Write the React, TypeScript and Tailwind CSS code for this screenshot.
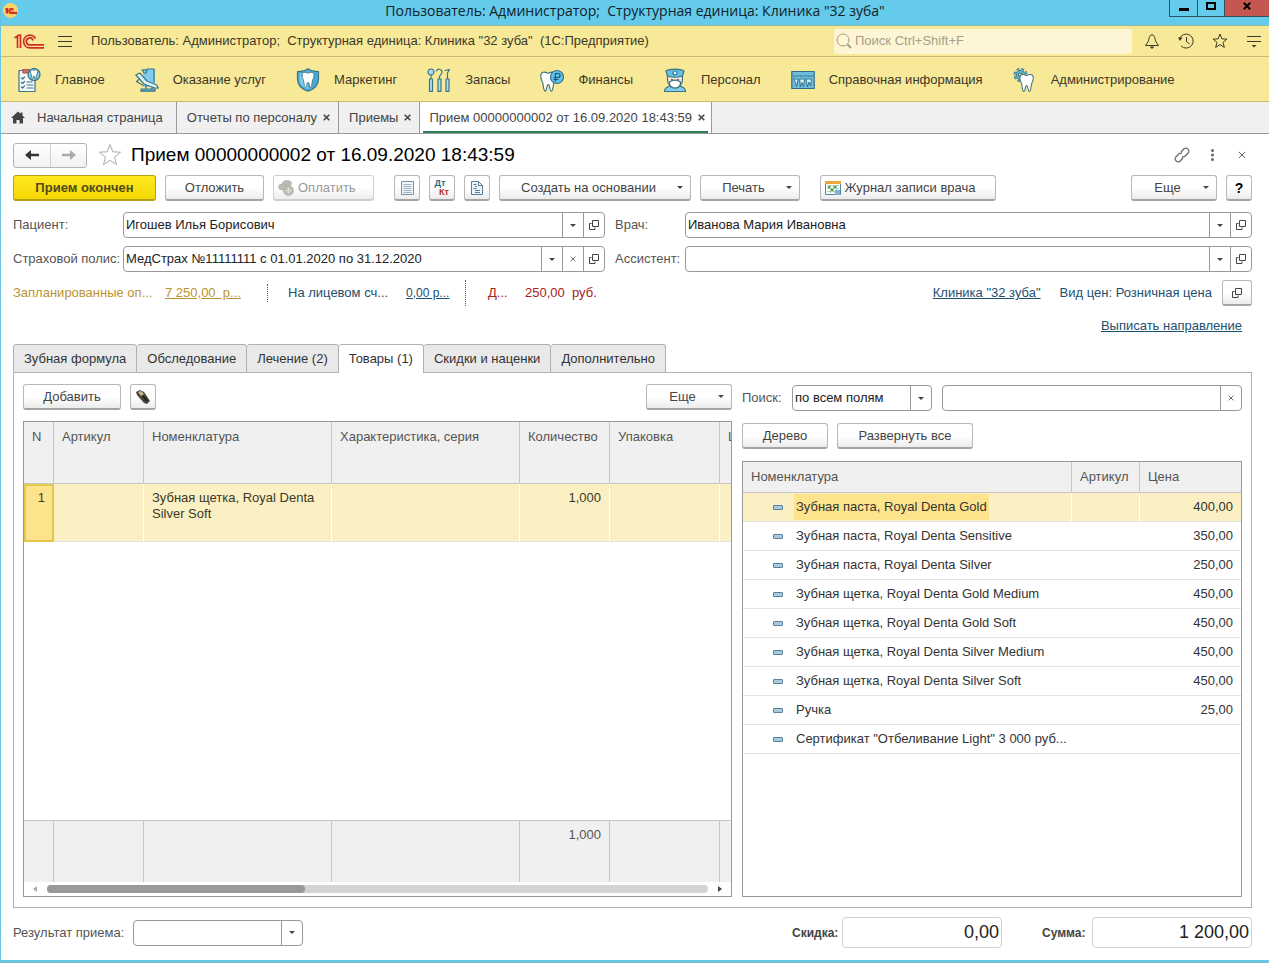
import { useState } from 'react';
import type { ReactNode } from 'react';
import clsx from 'clsx';

// ── Data ───────────────────────────────────────────────────────────────────

const SESSION = 'Пользователь: Администратор;\u00a0 Структурная единица: Клиника "32 зуба"';

const FORM_TABS = ['Зубная формула', 'Обследование', 'Лечение (2)', 'Товары (1)', 'Скидки и наценки', 'Дополнительно'];

const GOODS = [
  { name: 'Зубная паста, Royal Denta Gold', price: '400,00' },
  { name: 'Зубная паста, Royal Denta Sensitive', price: '350,00' },
  { name: 'Зубная паста, Royal Denta Silver', price: '250,00' },
  { name: 'Зубная щетка, Royal Denta Gold Medium', price: '450,00' },
  { name: 'Зубная щетка, Royal Denta Gold Soft', price: '450,00' },
  { name: 'Зубная щетка, Royal Denta Silver Medium', price: '450,00' },
  { name: 'Зубная щетка, Royal Denta Silver Soft', price: '450,00' },
  { name: 'Ручка', price: '25,00' },
  { name: 'Сертификат "Отбеливание Light" 3 000 руб...', price: '' },
];

// ── Section icons ──────────────────────────────────────────────────────────

const TOOTH =
  'M4 6C4 1 8 1 12 3C16 1 20 1 20 6C20 10 18 11 17.5 15C17 20 16 22 15 22C13.5 22 14 15 12 15C10 15 10.5 22 9 22C8 22 7 20 6.5 15C6 11 4 10 4 6Z';

function SectionSvg({ children }: { children: ReactNode }) {
  return (
    <svg className="h-6 w-6 shrink-0" viewBox="0 0 24 24" fill="none" stroke="#3d7483" strokeWidth="1.2" strokeLinejoin="round" strokeLinecap="round" aria-hidden="true">
      {children}
    </svg>
  );
}

const SECTIONS = [
  {
    title: 'Главное',
    icon: (
      <>
        <path d="M2 2.500h16v21H2z" fill="#f4faf7" />
        <path d="M6 1.500h6v3.500H6z" fill="#d66a6a" stroke="#a95555" />
        <path d="M4.500 10l1 1 2-2M4.500 14.500l1 1 2-2M4.500 19l1 1 2-2M10 14h5M10 17h6M10 20h6" />
        <circle cx="17" cy="6.500" r="6" fill="#82cdec" />
        <path d={TOOTH} transform="translate(11.500 1) scale(.46)" fill="#fff" strokeWidth="2" />
      </>
    ),
  },
  {
    title: 'Оказание услуг',
    icon: (
      <>
        <path d="M8 1h12v18H9z" fill="#82cdec" stroke="none" />
        <path d="M7 2h5l-1 3-2 0zM12 1h7v13" />
        <path d="M.8 7l4-2 7 8 10 4 1.500 3-3 .2-11-4z" fill="#dff2f8" />
        <path d="M4.500 11l-3 2.500 7 4M11 17v4M17 19v2" />
        <path d="M6 23.200v-2.200h14v2.200z" fill="#5fb6dc" />
      </>
    ),
  },
  {
    title: 'Маркетинг',
    icon: (
      <>
        <path d="M12 .8C9 3 5 3.500 1.500 3.500V11c0 6 4 10 10.500 12.300C18.500 21 22.500 17 22.500 11V3.500C19 3.500 15 3 12 .8z" fill="#4aa9d6" />
        <path d="M12 3C9 5 6 5.500 3.500 5.500V11c0 5 3 8 8.500 10.200z" fill="#82cdec" stroke="none" />
        <path d={TOOTH} transform="translate(3 3) scale(.75)" fill="#fff" />
      </>
    ),
  },
  {
    title: 'Запасы',
    icon: (
      <>
        <circle cx="4" cy="4" r="3" fill="#a9dff5" />
        <path d="M4 7v5M12.500 12V9c0-2 2.500-2.500 2.500-5 0-3-5-4-5.500-1M18 2.500l4.500-1-2 3.500v7" />
        <path d="M2.500 11h3v12.300h-3zM11 11h3v12.300h-3zM19 11h3v12.300h-3z" fill="#a9dff5" />
      </>
    ),
  },
  {
    title: 'Финансы',
    icon: (
      <>
        <path d={TOOTH} transform="translate(-3 2.500) scale(.94)" fill="#fff" />
        <circle cx="17" cy="9" r="6.500" fill="#5cc3ee" />
        <path d="M15.500 13V5.500h2.500c2.800 0 2.800 4 0 4h-4M14 11.500h4" stroke="#20576b" />
      </>
    ),
  },
  {
    title: 'Персонал',
    icon: (
      <>
        <path d="M1.500 23.500c0-4 3-5 6.500-5.500h8c3.500 .5 6.500 1.500 6.500 5.500z" fill="#82cdec" />
        <path d="M4.500 8h15v4c0 5-4 8-7.500 8s-7.500-3-7.500-8z" fill="#fbe3cf" />
        <path d="M4.500 8L3 3C6 .5 18 .5 21 3L19.500 8C15 9.500 9 9.500 4.500 8z" fill="#63bfe8" />
        <circle cx="12" cy="5" r="2" fill="#e8f7fc" />
        <path d="M6.500 14c3-2.500 8-2.500 11 0 .5 4-2 6-5.500 6s-6-2-5.500-6z" fill="#fff" />
        <path d="M8.500 11.500h1M14.500 11.500h1" />
      </>
    ),
  },
  {
    title: 'Справочная информация',
    icon: (
      <>
        <path d="M.8 3.500h22.400v17H.8z" fill="#6dbcdc" stroke="#2f6d84" />
        <path d="M2.500 8h19" stroke="#2f6d84" strokeDasharray="2 1.500" />
        <path d="M3 11h4l-.5 3-1 4.500-1-4zM9 11h4.500l-1 7.500-1.500-4-1.500 4zM15.500 11h5l-1 7-1.500-4-1.500 4.500z" fill="#d9f1fa" stroke="#2f6d84" strokeWidth=".9" />
      </>
    ),
  },
  {
    title: 'Администрирование',
    icon: (
      <>
        <circle cx="7.500" cy="7" r="5.500" strokeWidth="3" strokeLinecap="butt" strokeDasharray="2.600 1.720" />
        <circle cx="7.500" cy="7" r="4.500" fill="#62b9dc" />
        <circle cx="7.500" cy="7" r="5.300" stroke="#62b9dc" strokeLinecap="butt" strokeDasharray="2 2.160" strokeWidth="1.600" />
        <circle cx="7.500" cy="7" r="2" fill="#f8e99a" />
        <path d={TOOTH} transform="translate(3.500 5) scale(.84)" fill="#fff" />
      </>
    ),
  },
];

// ── Small pieces ───────────────────────────────────────────────────────────

function LogoMark({ className }: { className: string }) {
  return (
    <svg className={className} viewBox="0 0 30 15" fill="none" stroke="#cf2e26" strokeWidth="1.700" aria-hidden="true">
      <path d="M.5 3.500H3.500V14M1 3.500L5 1H6.500V14" />
      <path d="M21.500 4.500A6.300 6.300 0 1 0 16 13.800H30" />
      <path d="M19 6.500A3.400 3.400 0 1 0 16 10.800H30" />
    </svg>
  );
}

function Caret() {
  return (
    <svg className="h-[3px] w-[6px] shrink-0" viewBox="0 0 6 3" aria-hidden="true">
      <path d="M0 0h6L3 3z" fill="#444" />
    </svg>
  );
}

function Cross({ className }: { className: string }) {
  return (
    <svg className={className} viewBox="0 0 8 8" fill="none" stroke="currentColor" aria-hidden="true">
      <path d="M.8 .8l6.400 6.400M7.200 .8L.8 7.200" />
    </svg>
  );
}

function OpenIcon() {
  return (
    <svg className="h-[10px] w-[10px]" viewBox="0 0 10 10" fill="none" stroke="#444" aria-hidden="true">
      <path d="M3.500 .5h6v6h-6zM2.500 3.500h-2v6h5.500v-2" />
    </svg>
  );
}

function Star({ className }: { className: string }) {
  return (
    <svg className={className} viewBox="0 0 24 24" fill="none" stroke="currentColor" aria-hidden="true">
      <path d="M12 1.500l2.800 7.300 7.700.4-6 4.900 2 7.500L12 17.400l-6.500 4.200 2-7.500-6-4.900 7.700-.4z" />
    </svg>
  );
}

interface BtnProps {
  children: ReactNode;
  className?: string;
  label?: string;
  menu?: boolean;
  disabled?: boolean;
}

function Btn({ children, className, label, menu, disabled }: BtnProps) {
  return (
    <button
      type="button"
      aria-label={label}
      aria-haspopup={menu ? 'menu' : undefined}
      disabled={disabled}
      className={clsx(
        'flex h-[26px] shrink-0 items-center rounded-[3px] border border-b-2 bg-linear-to-b from-white from-50% to-[#ececec]',
        disabled ? 'border-[#cfcfcf] text-[#999]' : 'border-[#b8b8b8] border-b-[#a4a4a4] text-[#444]',
        className,
      )}
    >
      {menu ? (
        <>
          <span className="flex-1 text-center">{children}</span>
          <span className="pr-[7px]"><Caret /></span>
        </>
      ) : (
        <span className="flex flex-1 items-center justify-center">{children}</span>
      )}
    </button>
  );
}

const INNER_BTN = 'flex w-[21px] shrink-0 items-center justify-center border-l border-[#999] text-[#444]';
const BOX = 'flex h-[26px] min-w-0 rounded-[4px] border border-[#999] bg-white';

interface RefFieldProps {
  id: string;
  label: string;
  labelClass: string;
  value?: string;
  clearable?: boolean;
}

function RefField({ id, label, labelClass, value = '', clearable }: RefFieldProps) {
  return (
    <div className="flex min-w-0 items-center">
      <label htmlFor={id} className={clsx('shrink-0 text-[#555]', labelClass)}>{label}</label>
      <div className={clsx(BOX, 'flex-1')}>
        <input id={id} defaultValue={value} className="min-w-0 flex-1 bg-transparent px-[2px] text-[#222] outline-none" />
        <button type="button" aria-label="Выбрать" className={INNER_BTN}><Caret /></button>
        {clearable && (
          <button type="button" aria-label="Очистить" className={INNER_BTN}><Cross className="h-[6px] w-[6px]" /></button>
        )}
        <button type="button" aria-label="Открыть" className={INNER_BTN}><OpenIcon /></button>
      </div>
    </div>
  );
}

function SelectBox({ id, className, options }: { id: string; className: string; options: string[] }) {
  return (
    <div className={clsx(BOX, 'relative shrink-0', className)}>
      <select id={id} className="w-full appearance-none bg-transparent pl-[2px] text-[#222] outline-none">
        {options.map((o) => <option key={o}>{o}</option>)}
      </select>
      <span className={clsx(INNER_BTN, 'pointer-events-none absolute inset-y-0 right-0')}><Caret /></span>
    </div>
  );
}

// ── Window chrome ──────────────────────────────────────────────────────────

function TitleBar() {
  return (
    <header className="grid h-[26px] grid-cols-[1fr_auto_1fr] border-b border-[#8fb8a0] bg-[#65cbea]">
      <span className="mt-[3px] ml-[2px] flex h-[15px] w-[15px] items-center justify-center rounded-full bg-[#fbd36a]">
        <LogoMark className="h-[6px] w-3 stroke-[3px]" />
      </span>
      <span className="font-['Open_Sans',sans-serif] text-[14px] leading-[22px] text-[#10222a]">{SESSION}</span>
      <div className="flex h-[17px] justify-self-end border-b border-l border-[#2d5361]">
        <button type="button" aria-label="Свернуть" className="flex w-[27px] items-center justify-center">
          <span className="mt-[2px] h-[3px] w-[10px] bg-black" />
        </button>
        <button type="button" aria-label="Развернуть" className="flex w-[27px] items-center justify-center border-l border-[#2d5361]">
          <span className="mb-1 h-2 w-[10px] border-2 border-black" />
        </button>
        <button type="button" aria-label="Закрыть" className="flex w-[45px] items-center justify-center border-l border-[#2d5361] bg-[#c4574f]">
          <Cross className="mb-1 h-2 w-2 stroke-[2px] text-black" />
        </button>
      </div>
    </header>
  );
}

function AppBar() {
  return (
    <div className="flex h-[31px] items-center border-b border-[#c9b878] bg-[#f8e998] pl-[13px] text-[#3c3828]">
      <LogoMark className="h-[15px] w-[30px]" />
      <button type="button" aria-label="Меню" className="ml-[14px] flex w-[14px] flex-col gap-1">
        <span className="h-px bg-[#3c3828]" />
        <span className="h-px bg-[#3c3828]" />
        <span className="h-px bg-[#3c3828]" />
      </button>
      <span className="ml-[19px] flex-1 truncate">{SESSION}&nbsp; (1С:Предприятие)</span>
      <label className="flex h-[25px] w-[298px] items-center gap-[3px] rounded-[2px] bg-[#fdf5d3] pl-[2px]">
        <svg className="h-4 w-4" viewBox="0 0 16 16" fill="none" stroke="#a39d84" aria-hidden="true">
          <circle cx="7" cy="7" r="6" />
          <path d="M11.500 11.500l3.500 3.500" strokeWidth="2" />
        </svg>
        <input aria-label="Поиск" placeholder="Поиск Ctrl+Shift+F" className="flex-1 bg-transparent outline-none placeholder:text-[#a6a08a]" />
      </label>
      <div className="flex gap-[18px] pr-[7px] pl-3">
        <button type="button" aria-label="Уведомления">
          <svg className="h-4 w-4" viewBox="0 0 16 16" fill="none" stroke="currentColor">
            <path d="M8 1.500C5 2.500 5 6 4.500 8L1.500 12.500h13L11.500 8C11 6 11 2.500 8 1.500z" />
            <path d="M5.500 13.500h5L8 16z" fill="currentColor" stroke="none" />
          </svg>
        </button>
        <button type="button" aria-label="История">
          <svg className="h-4 w-4" viewBox="0 0 16 16" fill="none" stroke="currentColor">
            <path d="M1.500 6A7 7 0 1 1 3 12.800" />
            <path d="M8.500 4v4.500l3 2.500" />
            <path d="M0 4.500h4.500L2 8z" fill="currentColor" stroke="none" />
          </svg>
        </button>
        <button type="button" aria-label="Избранное"><Star className="h-4 w-4 stroke-[1.5px]" /></button>
        <button type="button" aria-label="Настройки">
          <svg className="h-4 w-4" viewBox="0 0 16 16" stroke="currentColor">
            <path d="M1 3.500h14M1 8.500h14" />
            <path d="M5.500 12h5L8 14.500z" fill="currentColor" stroke="none" />
          </svg>
        </button>
      </div>
    </div>
  );
}

function SectionNav() {
  return (
    <nav className="flex h-[45px] items-center gap-[30px] overflow-hidden border-b border-[#c9b878] bg-[#f8e998] pt-px pl-4">
      {SECTIONS.map((s) => (
        <a key={s.title} href="#" className="flex shrink-0 items-center gap-[14px] text-[#3c3828]">
          <SectionSvg>{s.icon}</SectionSvg>
          {s.title}
        </a>
      ))}
    </nav>
  );
}

function WindowTabs() {
  const tab = 'flex h-[31px] shrink-0 items-center border-r border-[#999] text-[#444]';
  return (
    <div className="flex h-8 border-b border-[#999] bg-[#f0f0f0]">
      <button type="button" className={clsx(tab, 'gap-3 pr-[13px] pl-[10px]')}>
        <svg className="h-[13px] w-[14px]" viewBox="0 0 14 13" fill="#444" aria-hidden="true">
          <path d="M7 .5L0 7h2v5.500h3.500V9h3v3.500H12V7h2l-2.500-2.500V1.500h-2v1.300z" />
        </svg>
        Начальная страница
      </button>
      {['Отчеты по персоналу', 'Приемы'].map((t) => (
        <div key={t} className={clsx(tab, 'gap-[6px] pr-2 pl-[10px]')}>
          <button type="button">{t}</button>
          <button type="button" aria-label={`Закрыть ${t}`}><Cross className="h-[7px] w-[7px] stroke-[1.8px]" /></button>
        </div>
      ))}
      <div className={clsx(tab, 'bg-white px-[3px]')}>
        <div className="flex h-full items-center gap-[6px] border-b-2 border-[#2c8157] pt-[2px] pr-[3px] pl-[6px]">
          <button type="button">Прием 00000000002 от 16.09.2020 18:43:59</button>
          <button type="button" aria-label="Закрыть прием"><Cross className="h-[7px] w-[7px] stroke-[1.8px]" /></button>
        </div>
      </div>
    </div>
  );
}

// ── Form ───────────────────────────────────────────────────────────────────

function FormTitle() {
  return (
    <div className="flex h-[26px] items-center">
      <div className="flex h-[25px] rounded-[3px] border border-[#b4b4b4] bg-linear-to-b from-white to-[#f1f1f1]">
        <button type="button" aria-label="Назад" className="flex w-9 items-center justify-center">
          <svg className="h-[10px] w-[14px]" viewBox="0 0 14 10" fill="#333"><path d="M0 5l6-5v3.800h8v2.400H6V10z" /></svg>
        </button>
        <button type="button" aria-label="Вперед" disabled className="flex w-9 items-center justify-center border-l border-[#d0d0d0]">
          <svg className="h-[10px] w-[14px]" viewBox="0 0 14 10" fill="#aaa"><path d="M14 5L8 0v3.800H0v2.400h8V10z" /></svg>
        </button>
      </div>
      <button type="button" aria-label="В избранное" className="ml-[11px] text-[#aaa]"><Star className="h-6 w-6" /></button>
      <h1 className="ml-[9px] flex-1 truncate text-[19px] leading-[26px] text-black">Прием 00000000002 от 16.09.2020 18:43:59</h1>
      <div className="flex items-center gap-[10px] text-[#666]">
        <button type="button" aria-label="Получить ссылку" className="flex w-5 justify-center">
          <svg className="h-4 w-4" viewBox="0 0 16 16" fill="none" stroke="currentColor" strokeWidth="1.200">
            <path d="M7 5l3-3.200a3 3 0 0 1 4.200 4.200l-3 3a3 3 0 0 1-3.200.6M9 11l-3 3.200A3 3 0 0 1 1.800 10l3-3a3 3 0 0 1 3.200-.6" />
          </svg>
        </button>
        <button type="button" aria-label="Действия" className="flex w-5 justify-center">
          <svg className="h-3 w-[3px]" viewBox="0 0 3 12" fill="currentColor"><circle cx="1.500" cy="1.500" r="1.500" /><circle cx="1.500" cy="6" r="1.500" /><circle cx="1.500" cy="10.500" r="1.500" /></svg>
        </button>
        <button type="button" aria-label="Закрыть форму" className="flex w-5 justify-center"><Cross className="h-2 w-2" /></button>
      </div>
    </div>
  );
}

function Toolbar() {
  return (
    <div className="flex gap-[9px]">
      <button type="button" className="h-[26px] w-[143px] shrink-0 rounded-[3px] border border-b-2 border-[#b5a01c] bg-linear-to-b from-[#ffe81f] to-[#f5d900] font-bold text-[#514a17]">
        Прием окончен
      </button>
      <Btn className="w-[99px]">Отложить</Btn>
      <button
        type="button"
        disabled
        className="flex h-[26px] w-[101px] shrink-0 items-center gap-1 rounded-[3px] border border-b-2 border-[#cfcfcf] bg-linear-to-b from-white from-50% to-[#ececec] pl-1 text-[#999]"
      >
        <svg className="h-4 w-4" viewBox="0 0 16 16" fill="#b9bdb0" stroke="#a3a79a" strokeWidth=".6" aria-hidden="true">
          <ellipse cx="9" cy="3.500" rx="4.500" ry="3" />
          <ellipse cx="4.500" cy="7" rx="4" ry="3" />
          <circle cx="10.500" cy="10.500" r="5" />
          <path d="M10.500 7.500v6M7.500 10.500h6" stroke="#dde1d4" strokeWidth="1.500" />
        </svg>
        Оплатить
      </button>
      <Btn className="ml-[11px] w-[26px]" label="Список">
        <svg className="h-[14px] w-[13px]" viewBox="0 0 13 14" fill="#eef5fa" stroke="#7891a6" aria-hidden="true">
          <path d="M.5 .5h12v13H.5z" />
          <path d="M2.500 3.500h8M2.500 5.500h8M2.500 7.500h8M2.500 9.500h8M2.500 11.500h8" stroke="#9db4c6" />
        </svg>
      </Btn>
      <Btn className="w-[26px]" label="Проводки">
        <span className="flex flex-col text-[9px] leading-[9px] font-bold">
          <span className="pr-1 text-[#2e6788]">Дт</span>
          <span className="pl-1 text-[#bd2b22]">Кт</span>
        </span>
      </Btn>
      <Btn className="w-[26px]" label="Отчет">
        <svg className="h-[14px] w-3" viewBox="0 0 12 14" fill="#eef5fa" stroke="#5f7d94" aria-hidden="true">
          <path d="M.5 .5h7l4 4v9H.5zM7.500 .5v4h4M2.500 3.500h3M4 5.500h2M2.500 7.500h3M4 9.500h5M4 11.500h5" />
        </svg>
      </Btn>
      <Btn className="w-[192px]" menu>Создать на основании</Btn>
      <Btn className="w-[100px]" menu>Печать</Btn>
      <Btn className="ml-[11px] w-[176px]">
        <span className="-ml-4 flex items-center gap-1">
          <svg className="h-4 w-4" viewBox="0 0 16 16" fill="none" aria-hidden="true">
            <path d="M.5 1.500h15v13H.5z" fill="#fff" stroke="#4b88ad" />
            <path d="M0 1h16v3H0z" fill="#f0a53a" />
            <path d="M3 6h2v2H3zM9 6h2v2H9zM6 9h2v2H6z" fill="#3fa352" />
            <path d="M2 5.500h12M2 8.500h12M2 11.500h8M5.500 5v8M8.500 5v8M11.500 5v5" stroke="#8cc08f" strokeWidth=".7" />
            <path d="M10 10h5v5h-5z" fill="#7fb2d8" />
          </svg>
          Журнал записи врача
        </span>
      </Btn>
      <span className="flex-1" />
      <Btn className="w-[86px]" menu>Еще</Btn>
      <Btn className="w-[26px]" label="Справка"><b className="text-[14px] text-black">?</b></Btn>
    </div>
  );
}

function Balances() {
  return (
    <div className="flex h-[26px] items-center text-[#1d4f70]">
      <span className="w-[152px] shrink-0 text-[#bb9430]">Запланированные оп...</span>
      <a href="#" className="w-[102px] shrink-0 text-[#bb9430] underline">7 250,00&nbsp; р...</a>
      <span className="h-[18px] border-l border-dotted border-[#555]" />
      <span className="ml-5 w-[118px] shrink-0">На лицевом сч...</span>
      <a href="#" className="w-[59px] shrink-0 text-[12px] underline">0,00 р...</a>
      <span className="h-[26px] border-l border-dotted border-[#555]" />
      <span className="ml-[22px] w-[37px] shrink-0 text-[#a8201a]">Д...</span>
      <span className="shrink-0 text-[#a8201a]">250,00&nbsp; руб.</span>
      <span className="flex-1" />
      <a href="#" className="underline">Клиника "32 зуба"</a>
      <span className="mr-[10px] ml-[19px]">Вид цен: Розничная цена</span>
      <Btn className="w-[30px]" label="Открыть вид цен"><OpenIcon /></Btn>
    </div>
  );
}

const LINE_COLS = 'grid-cols-[30px_90px_188px_188px_90px_110px_100px]';

function LinesTable() {
  const th = 'border-r border-b border-[#c6c6c6] px-2 py-[7px] text-left align-top font-normal text-[#555]';
  const td = 'border-r border-b border-r-white border-b-[#e4e4e4] px-2 py-[6px] align-top';
  return (
    <div className="flex min-h-[300px] flex-1 flex-col overflow-hidden border border-[#999] bg-white">
      <table className="w-[796px] table-fixed border-separate border-spacing-0">
        <colgroup>
          <col className="w-[30px]" /><col className="w-[90px]" /><col className="w-[188px]" /><col className="w-[188px]" />
          <col className="w-[90px]" /><col className="w-[110px]" /><col className="w-[100px]" />
        </colgroup>
        <thead>
          <tr className="h-[62px] bg-[#f0f0f0]">
            <th className={th}>N</th>
            <th className={th}>Артикул</th>
            <th className={th}>Номенклатура</th>
            <th className={clsx(th, 'whitespace-nowrap')}>Характеристика, серия</th>
            <th className={th}>Количество</th>
            <th className={th}>Упаковка</th>
            <th className={th}>Цена</th>
          </tr>
        </thead>
        <tbody>
          <tr className="h-[58px] bg-[#fbf0c3] text-[#3c3828]">
            <td className={clsx(td, 'bg-[#fde48c] text-right outline-2 -outline-offset-2 outline-[#e5c84a]')}>1</td>
            <td className={td} />
            <td className={td}>Зубная щетка, Royal Denta Silver Soft</td>
            <td className={td} />
            <td className={clsx(td, 'text-right')}>1,000</td>
            <td className={td} />
            <td className={td} />
          </tr>
        </tbody>
      </table>
      <div className="flex-1" />
      <div className={clsx('grid h-[62px] w-[796px] border-t border-[#c6c6c6] bg-[#f0f0f0] text-[#555]', LINE_COLS)}>
        {['', '', '', '', '1,000', '', ''].map((v, i) => (
          <span key={i} className="border-r border-[#c6c6c6] px-2 py-[6px] text-right">{v}</span>
        ))}
      </div>
      <div className="flex h-[14px] items-center px-[9px]">
        <svg className="h-[6px] w-1" viewBox="0 0 4 6" fill="#aaa"><path d="M4 0v6L0 3z" /></svg>
        <div className="mx-[10px] h-2 flex-1 rounded-full bg-[#d3d3d3]">
          <div className="h-2 w-[39%] rounded-full bg-[#999]" />
        </div>
        <svg className="h-[6px] w-1" viewBox="0 0 4 6" fill="#444"><path d="M0 0v6l4-3z" /></svg>
      </div>
    </div>
  );
}

function GoodsPicker() {
  const [selected, setSelected] = useState(0);
  const th = 'border-b border-[#c6c6c6] px-2 text-left font-normal';
  const td = 'border-b border-b-[#e2e2e2]';
  return (
    <div className="flex min-h-[300px] flex-1 flex-col border border-[#999] bg-white">
      <table className="w-full table-fixed border-separate border-spacing-0">
        <colgroup>
          <col /><col className="w-[68px]" /><col className="w-[101px]" />
        </colgroup>
        <thead>
          <tr className="h-[31px] bg-[#f0f0f0] text-[#555]">
            <th className={clsx(th, 'border-r')}>Номенклатура</th>
            <th className={clsx(th, 'border-r')}>Артикул</th>
            <th className={th}>Цена</th>
          </tr>
        </thead>
        <tbody>
          {GOODS.map((g, i) => (
            <tr
              key={g.name}
              onClick={() => setSelected(i)}
              className={clsx('h-[29px] text-[#333]', i === selected && 'bg-[#fbf0c3]')}
            >
              <td className={clsx(td, 'p-0', i === selected && 'border-r border-r-white')}>
                <span className="flex items-center pl-[30px]">
                  <span className="h-[5px] w-[10px] shrink-0 rounded-[1px] border border-[#5a7f98] bg-[#a9cbe0]" />
                  <span className={clsx('ml-[11px] truncate px-[2px] leading-[26px]', i === selected && 'bg-[#fde48c]')}>{g.name}</span>
                </span>
              </td>
              <td className={clsx(td, i === selected && 'border-r border-r-white')} />
              <td className={clsx(td, 'px-2 text-right')}>{g.price}</td>
            </tr>
          ))}
        </tbody>
      </table>
    </div>
  );
}

function GoodsPanel() {
  return (
    <section className="grid flex-1 grid-cols-[minmax(0,709fr)_minmax(0,500fr)] gap-[10px] border border-t-0 border-[#b0b0b0] px-[9px] pt-[11px] pb-[10px]">
      <div className="flex min-w-0 flex-col gap-[11px]">
        <div className="flex gap-[9px]">
          <Btn className="w-[98px]">Добавить</Btn>
          <Btn className="w-[26px]" label="Сканер">
            <svg className="h-4 w-4" viewBox="0 0 16 16" aria-hidden="true">
              <path d="M1 3l4-2 4 2 6 9-3 3-3-1L2 6z" fill="#4a4338" />
              <path d="M3 3l3-1 3 3-3 2z" fill="#c9b899" />
              <path d="M8 7l4 5" stroke="#1e1a15" strokeWidth="1.500" />
            </svg>
          </Btn>
          <span className="flex-1" />
          <Btn className="w-[86px]" menu>Еще</Btn>
        </div>
        <LinesTable />
      </div>
      <div className="flex min-w-0 flex-col gap-3">
        <div className="flex items-center pt-px">
          <label htmlFor="search-field" className="w-[50px] shrink-0 text-[#555]">Поиск:</label>
          <SelectBox id="search-field" className="w-[140px]" options={['по всем полям', 'Номенклатура', 'Артикул']} />
          <div className={clsx(BOX, 'ml-[10px] flex-1')}>
            <input aria-label="Строка поиска" className="min-w-0 flex-1 bg-transparent px-[2px] outline-none" />
            <button type="button" aria-label="Очистить" className={INNER_BTN}><Cross className="h-[6px] w-[6px]" /></button>
          </div>
        </div>
        <div className="flex gap-[9px]">
          <Btn className="w-[86px]">Дерево</Btn>
          <Btn className="w-[136px]">Развернуть все</Btn>
        </div>
        <GoodsPicker />
      </div>
    </section>
  );
}

function Total({ id, label, value }: { id: string; label: string; value: string }) {
  return (
    <div className="flex items-center">
      <label htmlFor={id} className="w-[50px] text-[12px] font-bold text-[#444]">{label}</label>
      <input id={id} readOnly value={value} className="h-[31px] w-40 rounded-[4px] border border-[#d0d0d0] px-[2px] text-right text-[18px] text-[#222] outline-none" />
    </div>
  );
}

export default function App() {
  const [tab, setTab] = useState('Товары (1)');

  return (
    <div className="flex min-h-screen flex-col border-b-[3px] border-l border-[#6cc3e0] bg-white font-['Liberation_Sans',Arial,sans-serif] text-[13px] leading-4">
      <TitleBar />
      <AppBar />
      <SectionNav />
      <WindowTabs />

      <main className="flex flex-1 flex-col pt-2 pr-[17px] pb-3 pl-3">
        <FormTitle />
        <div className="mt-[7px]"><Toolbar /></div>

        <div className="mt-[11px] grid grid-cols-[minmax(0,592fr)_minmax(0,637fr)] gap-x-[10px] gap-y-2">
          <RefField id="patient" label="Пациент:" labelClass="w-[110px]" value="Игошев Илья Борисович" />
          <RefField id="doctor" label="Врач:" labelClass="w-[70px]" value="Иванова Мария Ивановна" />
          <RefField id="policy" label="Страховой полис:" labelClass="w-[110px]" value="МедСтрах №11111111 с 01.01.2020 по 31.12.2020" clearable />
          <RefField id="assistant" label="Ассистент:" labelClass="w-[70px]" />
        </div>

        <div className="mt-2"><Balances /></div>
        <a href="#" className="mt-3 mr-[10px] self-end text-[#1d4f70] underline">Выписать направление</a>

        {/* Tab strip: the bottom rule is drawn by every tab except the active one */}
        <div className="mt-[10px] flex" role="tablist">
          {FORM_TABS.map((t, i) => (
            <button
              key={t}
              type="button"
              role="tab"
              aria-selected={t === tab}
              onClick={() => setTab(t)}
              className={clsx(
                'h-[29px] shrink-0 rounded-t-[3px] border-t border-r border-[#b0b0b0] px-[10px] text-[#333]',
                i === 0 && 'border-l',
                t === tab ? 'bg-white' : 'border-b bg-[#e9e9e9]',
              )}
            >
              {t}
            </button>
          ))}
          <span className="flex-1 border-b border-[#b0b0b0]" />
        </div>
        <GoodsPanel />

        <footer className="mt-[9px] flex items-center">
          <label htmlFor="result" className="w-[120px] shrink-0 text-[#555]">Результат приема:</label>
          <SelectBox id="result" className="w-[170px]" options={['']} />
          <div className="ml-auto flex gap-10">
            <Total id="discount" label="Скидка:" value="0,00" />
            <Total id="total" label="Сумма:" value="1 200,00" />
          </div>
        </footer>
      </main>
    </div>
  );
}
